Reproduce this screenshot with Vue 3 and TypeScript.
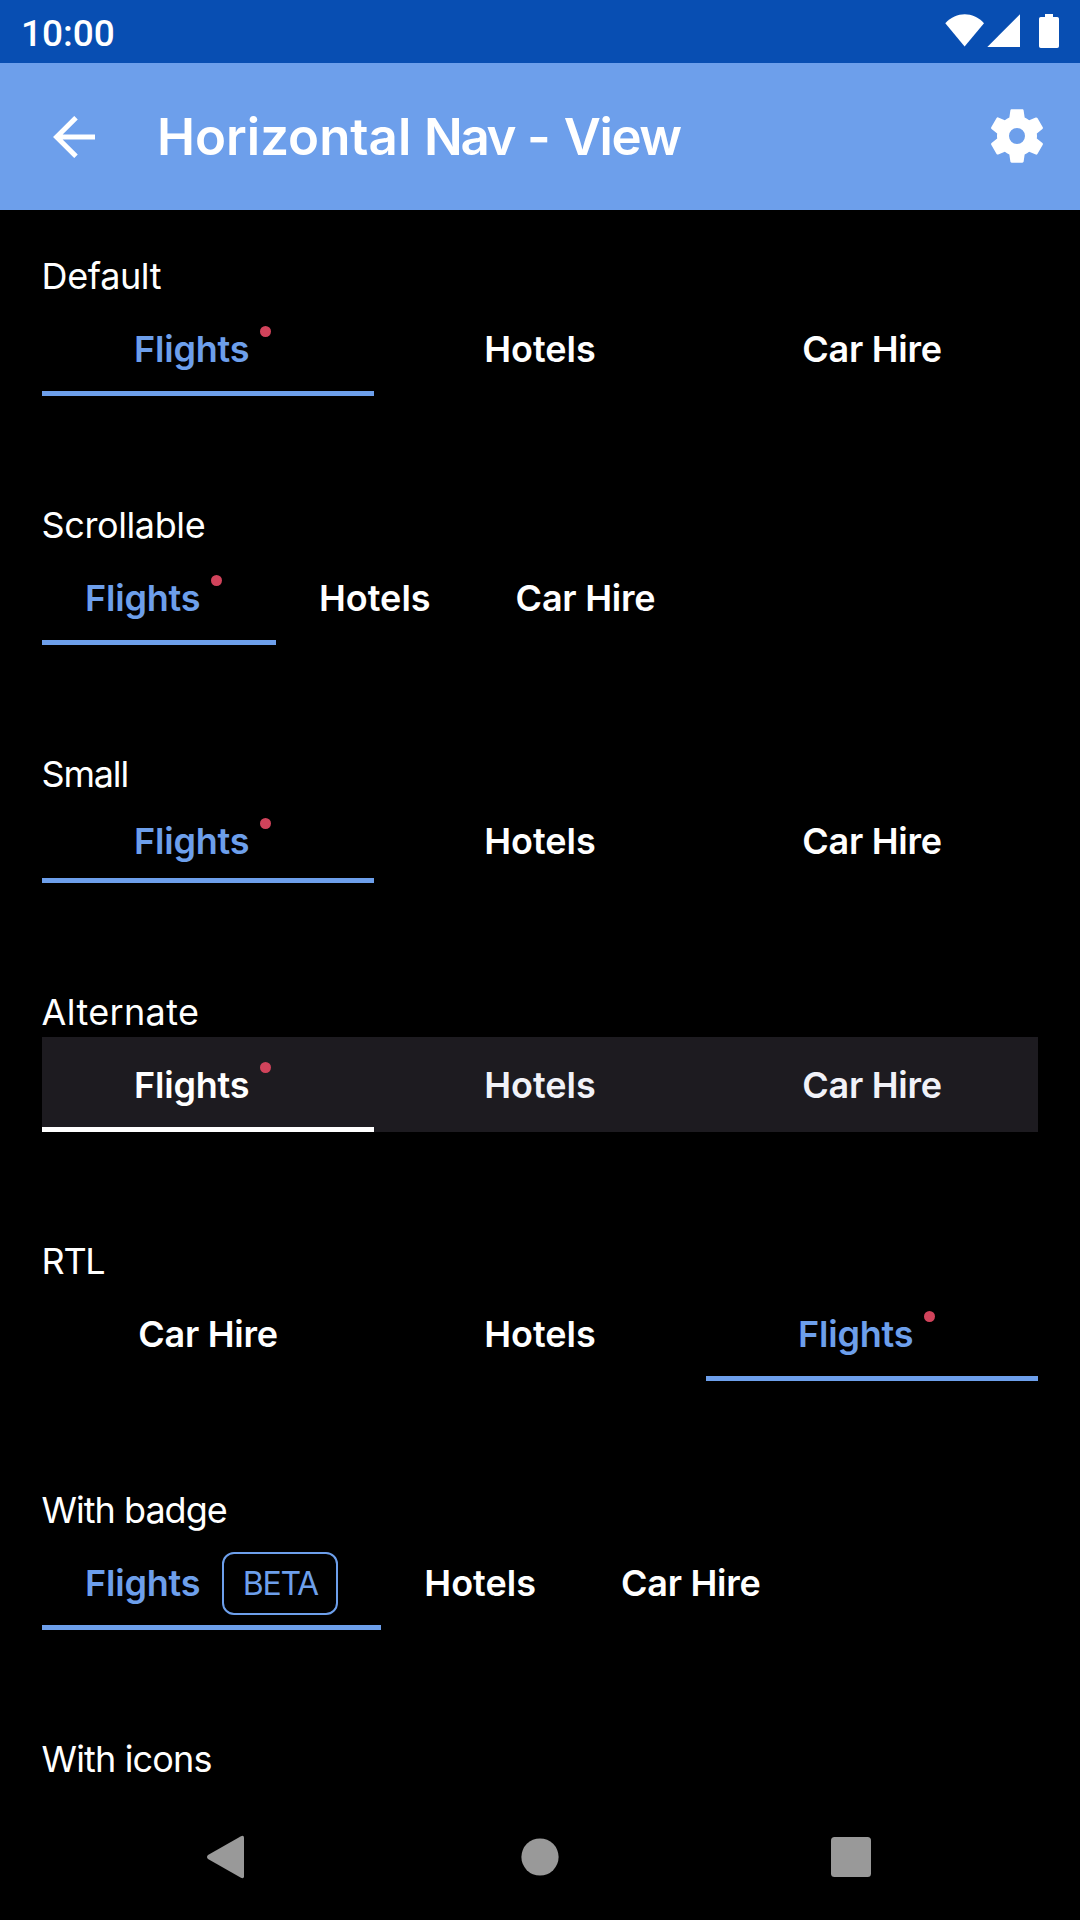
<script setup lang="ts">
interface Tab {
  name: string
  active?: boolean
  dot?: boolean
  badge?: string
}

interface Section {
  title: string
  tracking: number
  variant?: string
  tabs: Tab[]
}

const flights: Tab = { name: 'Flights', active: true, dot: true }
const hotels: Tab = { name: 'Hotels' }
const carHire: Tab = { name: 'Car Hire' }

const sections: Section[] = [
  { title: 'Default', tracking: -0.4, tabs: [flights, hotels, carHire] },
  { title: 'Scrollable', tracking: -0.4, variant: 'scrollable', tabs: [flights, hotels, carHire] },
  { title: 'Small', tracking: -1.2, variant: 'small', tabs: [flights, hotels, carHire] },
  { title: 'Alternate', tracking: 0.35, variant: 'alternate', tabs: [flights, hotels, carHire] },
  { title: 'RTL', tracking: -1.4, tabs: [carHire, hotels, flights] },
  {
    title: 'With badge',
    tracking: -1,
    variant: 'scrollable',
    tabs: [{ name: 'Flights', active: true, badge: 'BETA' }, hotels, carHire],
  },
  { title: 'With icons', tracking: -0.85, tabs: [] },
]

const slug = (name: string) => name.toLowerCase().replace(' ', '-')
</script>

<template>
  <div class="screen">
    <div class="status">
      <span class="clock">10:00</span>
      <svg class="status-icons" width="116" height="36" viewBox="0 0 116 36" fill="#fff">
        <path d="M0.3 9.2C11.5-2.6 28-2.6 39 9.2L19.6 32.4Z" />
        <path d="M42.3 33H75V0.3Z" />
        <path d="M100 0h8v3h4.2q1.8 0 1.8 1.8v27.4q0 1.8-1.8 1.8H95.800q-1.800 0-1.800-1.800V4.800q0-1.800 1.800-1.800H100z" />
      </svg>
    </div>

    <header class="bar">
      <svg class="back" width="42" height="42" viewBox="0 0 42 42" fill="none" stroke="#fff" stroke-width="5">
        <path d="M23 1.700L3.600 21L23 40.300M3.600 21H42" />
      </svg>
      <h1>Horizontal <span class="nav-word">Nav</span> <span class="dash">-</span> <span class="view-word">View</span></h1>
      <svg class="gear" width="64" height="64" viewBox="0 0 24 24" fill="#fff">
        <path d="M19.430 12.980c.04-.32.07-.64.07-.98s-.03-.66-.07-.98l2.110-1.650c.19-.15.24-.42.12-.64l-2-3.460c-.12-.22-.39-.3-.61-.22l-2.490 1c-.52-.4-1.080-.73-1.690-.98l-.38-2.650C14.460 2.180 14.250 2 14 2h-4c-.25 0-.46.18-.49.42l-.38 2.650c-.61.25-1.170.59-1.690.98l-2.490-1c-.23-.09-.49 0-.61.22l-2 3.460c-.13.22-.07.49.12.64l2.110 1.650c-.04.32-.07.65-.07.98s.03.66.07.98l-2.110 1.650c-.19.15-.24.42-.12.64l2 3.460c.12.22.39.3.61.22l2.490-1c.52.4 1.080.73 1.690.98l.38 2.650c.03.24.24.42.49.42h4c.25 0 .46-.18.49-.42l.38-2.650c.61-.25 1.170-.59 1.690-.98l2.490 1c.23.09.49 0 .61-.22l2-3.460c.12-.22.07-.49-.12-.64l-2.110-1.650zM12 15a3 3 0 1 1 0-6 3 3 0 0 1 0 6z" />
      </svg>
    </header>

    <main>
      <section v-for="s in sections" :key="s.title">
        <h2 :style="{ letterSpacing: s.tracking + 'px' }">{{ s.title }}</h2>
        <nav v-if="s.tabs.length" :class="s.variant">
          <div v-for="t in s.tabs" :key="t.name" class="tab" :class="{ active: t.active }">
            <span class="name" :class="[slug(t.name), { dotted: t.dot }]">
              <span>{{ t.name }}</span>
              <i v-if="t.dot" class="dot"></i>
            </span>
            <span v-if="t.badge" class="badge">{{ t.badge }}</span>
          </div>
        </nav>
      </section>
    </main>

    <footer>
      <svg width="40" height="44" viewBox="0 0 40 44" fill="#999">
        <path d="M2 20L34.500 1.400Q38 -0.200 38 2.800V41.200Q38 44.200 34.500 42.600L2 24Q0 22 2 20Z" />
      </svg>
      <svg width="40" height="44" viewBox="0 0 40 44" fill="#999"><circle cx="21" cy="22" r="18.600" /></svg>
      <svg width="40" height="44" viewBox="0 0 40 44" fill="#999"><rect y="2" width="40" height="40" rx="3.500" /></svg>
    </footer>
  </div>
</template>

<style>
body {
  background: #000;
}
</style>

<style scoped>
.screen {
  width: 1080px;
  height: 1920px;
  display: flex;
  flex-direction: column;
  overflow: hidden;
  background: #000;
  color: #fff;
  font-family: Inter, 'Liberation Sans', sans-serif;
}
.status {
  height: 63px;
  flex: none;
  box-sizing: border-box;
  padding: 14px 19px 0 21px;
  display: flex;
  justify-content: space-between;
  background: #084eb2;
}
.clock {
  font: 500 37px/39px Roboto, sans-serif;
}
.bar {
  height: 147px;
  flex: none;
  box-sizing: border-box;
  padding: 0 31.500px 0 53px;
  display: flex;
  align-items: center;
  background: #6d9feb;
}
.gear {
  margin: -2px 0 0 auto;
}
h1 {
  margin: 0 0 0 62px;
  font-size: 51px;
  line-height: 62px;
  font-weight: 600;
  letter-spacing: 0;
  white-space: nowrap;
}
.nav-word {
  letter-spacing: -2.4px;
}
.dash {
  display: inline-block;
  width: 24px;
  text-align: center;
}
.view-word {
  letter-spacing: -1.4px;
}
main {
  flex: 1;
  min-height: 0;
  overflow: hidden;
  padding: 39px 42px 0;
}
section {
  padding-bottom: 102px;
}
h2 {
  margin: 0 0 0 -0.400px;
  height: 52px;
  font-size: 36px;
  line-height: 54px;
  font-weight: 400;
  white-space: nowrap;
}
nav {
  display: flex;
  height: 95px;
}
.tab {
  flex: 1 1 0;
  box-sizing: border-box;
  display: flex;
  align-items: center;
  justify-content: center;
  border-bottom: 5px solid transparent;
  font-size: 36px;
  line-height: 44px;
  font-weight: 600;
  white-space: nowrap;
}
.tab.active {
  color: #6d9feb;
  border-color: #6d9feb;
}
.name {
  position: relative;
  padding-top: 6px;
}
.dotted {
  width: 149px;
}
.dot {
  position: absolute;
  left: 127px;
  top: 5px;
  width: 11px;
  height: 11px;
  border-radius: 50%;
  background: #d1435b;
}
.flights {
  padding-left: 1px;
  letter-spacing: -0.2px;
}
.car-hire {
  letter-spacing: -0.25px;
}
.scrollable .tab {
  flex: none;
  padding: 0 42px;
}
.scrollable .hotels {
  padding-left: 1px;
}
.scrollable .car-hire {
  padding-left: 1px;
}
.small {
  height: 84px;
}
.small .name {
  padding-top: 5px;
}
.small .dot {
  top: 3.500px;
}
.alternate {
  background: #1d1b20;
}
.alternate .tab {
  color: #f1f2f8;
}
.alternate .tab.active {
  color: #fff;
  border-color: #fff;
}
.badge {
  box-sizing: border-box;
  width: 116px;
  height: 63px;
  margin: 6px 1px 0 22px;
  border: 2px solid #6d9feb;
  border-radius: 12px;
  font-size: 32px;
  line-height: 59px;
  font-weight: 400;
  letter-spacing: -1.300px;
  text-align: center;
}
footer {
  height: 126px;
  flex: none;
  box-sizing: border-box;
  padding: 41px 209px 0 206px;
  display: flex;
  justify-content: space-between;
}
</style>
